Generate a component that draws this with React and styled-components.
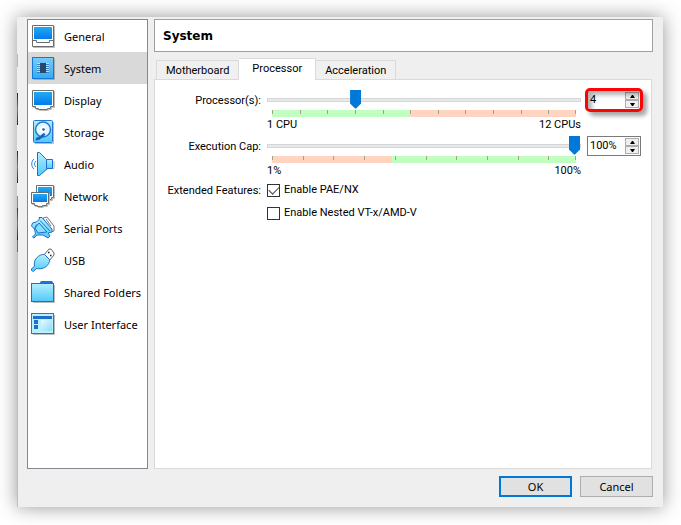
import React, { useState } from "react";
import styled, { createGlobalStyle, css } from "styled-components";

const GlobalStyle = createGlobalStyle`
	* {
		box-sizing: border-box;
	}

	body {
		margin: 0;
		background: #fff;
		color: #000;
		font-family: Roboto, "Liberation Sans", sans-serif;
		font-size: 11px;
		line-height: 16px;
	}

	button,
	input {
		font: inherit;
		color: inherit;
	}
`;

const Desktop = styled.div`
	display: flex;
	min-height: 100vh;
	padding: 17px 18px 18px 17px;
`;

const Dialog = styled.main`
	flex: 1;
	display: flex;
	flex-direction: column;
	padding: 2px 10px 10px 9px;
	background: #efefef;
	border: 0 solid;
	border-left-width: 1px;
	border-image: linear-gradient(
			#efefef 38px,
			#b9b9b9 38px 51px,
			#efefef 51px 77px,
			#222 77px,
			#777 93px,
			#222 109px,
			#efefef 109px 134px,
			#222 134px,
			#777 150px,
			#222 166px,
			#efefef 166px 179px,
			#3a9bea 179px 191px,
			#333 191px,
			#777 207px,
			#222 223px,
			#1685e0 223px 235px,
			#bdbdbd 235px
		)
		1;
	box-shadow: 0 0 18px rgba(0, 0, 0, 0.42);
`;

const Body = styled.div`
	flex: 1;
	display: grid;
	grid-template-columns: 121px 1fr;
	gap: 6px;
`;

const Sidebar = styled.nav`
	background: #fff;
	border: 1px solid #828790;
	font-family: "Noto Sans", "Open Sans", sans-serif;
`;

const NavItem = styled.a`
	display: flex;
	align-items: center;
	gap: 9px;
	height: 32px;
	padding: 1px 0 0 3px;
	color: #000;
	text-decoration: none;
	white-space: nowrap;
	background: ${({ $active }) => ($active ? "#d9d9d9" : "transparent")};

	svg {
		flex: none;
		margin-bottom: 1px;
	}
`;

const Content = styled.section`
	display: flex;
	flex-direction: column;
	min-width: 0;
`;

const Title = styled.h1`
	margin: 0;
	height: 33px;
	padding: 0 8px;
	border: 1px solid #a0a0a0;
	background: #fff;
	font-family: "DejaVu Sans", sans-serif;
	font-size: 12px;
	font-weight: bold;
	line-height: 33px;
`;

const Tabs = styled.div`
	display: flex;
	align-items: flex-end;
	height: 27px;
	padding-left: 2px;
`;

const Tab = styled.button`
	height: 19px;
	padding: 1px 9px 0;
	border: 1px solid #dadada;
	border-bottom: 0;
	background: #f0f0f0;
	line-height: 16px;

	& + & {
		border-left: 0;
	}

	${({ $active }) =>
		$active &&
		css`
			height: 22px;
			margin-bottom: -1px;
			padding: 0 13px 1px;
			background: #fff;
			z-index: 1;
		`}
`;

const Panel = styled.div`
	flex: 1;
	margin-right: 1px;
	padding: 10px 10px 10px 9px;
	border: 1px solid #dadada;
	background: #fff;
`;

const Form = styled.div`
	display: grid;
	grid-template-columns: 97px 1fr 54px;
	column-gap: 6px;
`;

const Label = styled.label`
	padding-top: 3px;
	text-align: right;
	white-space: nowrap;
`;

const GroupLabel = styled(Label)`
	padding-top: 1px;
`;

const SliderBlock = styled.div`
	height: 46px;
	min-width: 0;
`;

const Range = styled.input`
	appearance: none;
	display: block;
	width: 100%;
	height: 19px;
	margin: 0;
	background: transparent;

	&::-webkit-slider-runnable-track {
		height: 4px;
		border: 1px solid #d6d6d6;
		background: #e7eaea;
	}

	&::-webkit-slider-thumb {
		appearance: none;
		width: 11px;
		height: 19px;
		margin-top: -9px;
		background: #0078d7;
		clip-path: polygon(0 0, 100% 0, 100% 14px, 6px 100%, 5px 100%, 0 14px);
	}
`;

const Scale = styled.div`
	display: grid;
	grid-template-columns: ${({ $columns }) => $columns};
	height: 7px;
	margin: 1px 5px 0;
	background: linear-gradient(
		to right,
		${({ $from, $split }) => `${$from} ${$split}`},
		${({ $to, $split }) => `${$to} ${$split}`}
	);
`;

const Tick = styled.span`
	height: 4px;
	border-left: 1px solid #a5a192;

	&:last-child {
		border-right: 1px solid #a5a192;
	}
`;

const Limits = styled.div`
	display: flex;
	justify-content: space-between;
`;

const Spin = styled.div`
	position: relative;
	display: flex;
	height: 20px;
	border: 1px solid #7a7a7a;
	background: #fff;

	${({ $marked }) =>
		$marked &&
		css`
			&::after {
				content: "";
				position: absolute;
				inset: -3px;
				border: 3px solid #fa0505;
				border-radius: 5px;
				box-shadow: 4px 4px 4px rgba(0, 0, 0, 0.35),
					inset 4px 4px 4px rgba(0, 0, 0, 0.3);
				pointer-events: none;
			}
		`}
`;

const SpinInput = styled.input`
	flex: 1;
	min-width: 0;
	padding: 0 0 0 2px;
	border: 0;
	outline: 0;
	background: transparent;
`;

const SpinButtons = styled.div`
	display: flex;
	flex-direction: column;
	width: 14px;
	margin: 1px;
`;

const SpinButton = styled.button`
	flex: 1;
	display: flex;
	align-items: center;
	justify-content: center;
	padding: 0;
	border: 1px solid #adadad;
	background: #efefef;
`;

const Checks = styled.div`
	display: grid;
	grid-column: span 2;
	gap: 7px;
`;

const Check = styled.label`
	display: flex;
	align-items: center;
	gap: 4px;
`;

const CheckBox = styled.input`
	appearance: none;
	width: 13px;
	height: 13px;
	margin: 0;
	border: 1px solid #333;
	background: #fff;

	&:checked::after {
		content: "";
		display: block;
		width: 9px;
		height: 5px;
		margin: 1px;
		border: solid #444;
		border-width: 0 0 1px 1px;
		transform: rotate(-45deg);
	}
`;

const Footer = styled.footer`
	display: flex;
	justify-content: flex-end;
	gap: 8px;
	padding-top: 7px;
	font-family: "Noto Sans", "Open Sans", sans-serif;
`;

const DialogButton = styled.button`
	width: 73px;
	height: 21px;
	padding: 0;
	border: ${({ $primary }) =>
		$primary ? "2px solid #0078d7" : "1px solid #adadad"};
	background: #e1e1e1;
`;

const Screen = ({ d, x, y, w, h }) => (
	<>
		<path d={d} transform="translate(1 1)" fill="none" stroke="#bbb" />
		<path d={d} fill="#fff" stroke="#6c6c6c" />
		<rect x={x} y={y} width={w} height={h} fill="url(#screen)" />
	</>
);

const icons = {
	general: (
		<>
			<Screen d="M1.5 1.5h21v21h-21z" x={3} y={3} w={18} h={12} />
			<path d="M1.5 16.5h4v2h13v-2h4" fill="none" stroke="#6c6c6c" />
		</>
	),
	system: (
		<>
			<path d="M2.5 23.5h21v-21" fill="none" stroke="#aaa" />
			<rect x="1.5" y="1.5" width="21" height="21" fill="url(#chip)" stroke="#1478d8" />
			<path d="M6 7.5h12M6 9.5h12M6 11.5h12M6 13.5h12M6 15.5h12" stroke="#b5e2fa" />
			<path d="M6 8.5h12M6 10.5h12M6 12.5h12M6 14.5h12M6 16.5h12" stroke="#3b82c4" />
			<rect x="9" y="7" width="6" height="10" fill="#26486b" />
		</>
	),
	display: (
		<Screen
			d="M1.5 2.5h21v16h-3v2h-3v1h-9v-1h-3v-2h-3z"
			x={3}
			y={4}
			w={18}
			h={13}
		/>
	),
	storage: (
		<>
			<path d="M4 23.5h18.500V2" fill="none" stroke="#bbb" />
			<rect x="2.500" y=".5" width="19" height="22" rx="1" fill="url(#light)" stroke="#2477d4" />
			<circle cx="12" cy="9.500" r="7.500" fill="#e2f7ff" stroke="#2477d4" strokeWidth="1.500" />
			<circle cx="12" cy="9.500" r="3" fill="#fff" />
			<circle cx="12.500" cy="9.500" r="1.300" fill="#1a56a8" />
			<path d="M12.500 13l2 1-1.500 2.500L8 20l-3.500.5L5 18l4-2z" fill="#1c62bd" />
		</>
	),
	audio: (
		<>
			<path d="M7 23.500l2-1 8-6h6V9" fill="none" stroke="#bbb" />
			<path d="M3 7c-3 2-3 8 0 10M5 9c-2 2-2 4 0 6" fill="none" stroke="#2b7fda" />
			<path d="M6.500.5h2l8 8v8l-8 7h-2z" fill="url(#light)" stroke="#1b70cf" />
			<path d="M15.500 7.500h6v9h-6z" fill="url(#light)" stroke="#1b70cf" />
		</>
	),
	network: (
		<>
			<Screen d="M5.500 1.500h17v12h-2v2h-15z" x={7} y={3} w={14} h={9} />
			<Screen d="M.5 8.500h17v11h-2v2h-4v1h-5v-1h-3v-2h-3z" x={2} y={10} w={14} h={8} />
		</>
	),
	serial: (
		<>
			<path d="M12 2l4-1 7 9v5l-3 1z" fill="#fff" stroke="#777" />
			<path d="M15 3l5 7" stroke="#777" />
			<path d="M8 1.500h3l10 11.500v3l-4 1 2 3-2 2-5-3H6l-3 3-1.500-1 3-3-1-5-3-3 1-3 4-1 3-3z" fill="url(#light)" stroke="#1b70cf" strokeLinejoin="round" />
			<path d="M9 4.500L19 15M5.500 8.500L3.500 13.500" stroke="#1b70cf" />
			<path d="M8 7l8 9-9 1-3-5z" fill="#8bdefb" stroke="#1b70cf" strokeLinejoin="round" />
		</>
	),
	usb: (
		<>
			<path d="M13 7l5-6h2l3 4v2l-5 6z" fill="#fff" stroke="#666" strokeLinejoin="round" />
			<path d="M17 4.500h1.500M19 7.500h1.500" stroke="#222" strokeWidth="1.500" />
			<path d="M11.500 6.500h2l5 5v2c-2 6-7 8-13 7l-3 3-2-1v-1.500l3-3c-1-5 2-10 8-11.500z" fill="url(#light)" stroke="#1b70cf" />
		</>
	),
	folders: (
		<>
			<path d="M2 22.500h21.500V5" fill="none" stroke="#bbb" />
			<path d="M8 4l2-3h11l2 3v2H8z" fill="#2372cf" />
			<rect x=".5" y="3.500" width="22" height="18" fill="url(#light)" stroke="#1b70cf" />
		</>
	),
	ui: (
		<>
			<path d="M2 22.500h21.500V3" fill="none" stroke="#bbb" />
			<rect x=".5" y="1.500" width="22" height="20" fill="#b9efff" stroke="#2477d4" />
			<path d="M2 4h19v3H2zM3 8h4v4H3zM3 13h4v4H3z" fill="#1f6ecb" />
			<rect x="10" y="8" width="11" height="11" fill="url(#pane)" />
		</>
	),
};

const Icon = ({ name }) => (
	<svg width="24" height="24" viewBox="0 0 24 24" aria-hidden="true">
		{icons[name]}
	</svg>
);

const Defs = styled.svg`
	position: absolute;
	width: 0;
	height: 0;
`;

const IconGradients = () => (
	<Defs aria-hidden="true">
		<defs>
			<linearGradient id="screen" x2="0" y2="1">
				<stop stopColor="#22aaf0" />
				<stop offset="1" stopColor="#027bee" />
			</linearGradient>
			<linearGradient id="chip" x2="0" y2="1">
				<stop stopColor="#7bcbf8" />
				<stop offset="1" stopColor="#35abf2" />
			</linearGradient>
			<linearGradient id="light" x2="0" y2="1">
				<stop stopColor="#b4efff" />
				<stop offset="1" stopColor="#4fcaf8" />
			</linearGradient>
			<linearGradient id="pane" x2="1" y2="1">
				<stop stopColor="#e6faff" />
				<stop offset="1" stopColor="#8bdcf8" />
			</linearGradient>
		</defs>
	</Defs>
);

const pages = [
	["general", "General"],
	["system", "System"],
	["display", "Display"],
	["storage", "Storage"],
	["audio", "Audio"],
	["network", "Network"],
	["serial", "Serial Ports"],
	["usb", "USB"],
	["folders", "Shared Folders"],
	["ui", "User Interface"],
];

const SliderRow = ({ id, label, min, max, value, onChange, suffix = "", limits, scale, marked }) => {
	const step = delta =>
		onChange(Math.min(max, Math.max(min, value + delta)));

	const handleText = e => {
		const next = parseInt(e.target.value, 10);
		if (next >= min && next <= max) {
			onChange(next);
		}
	};

	return (
		<>
			<Label htmlFor={id}>{label}</Label>
			<SliderBlock>
				<Range
					id={id}
					type="range"
					min={min}
					max={max}
					value={value}
					onChange={e => onChange(Number(e.target.value))}
				/>
				<Scale $columns={scale.columns} $from={scale.from} $to={scale.to} $split={scale.split}>
					{Array.from({ length: scale.cells }, (_, i) => (
						<Tick key={i} />
					))}
				</Scale>
				<Limits>
					<span>{limits[0]}</span>
					<span>{limits[1]}</span>
				</Limits>
			</SliderBlock>
			<Spin $marked={marked}>
				<SpinInput aria-label={label} value={value + suffix} onChange={handleText} />
				<SpinButtons>
					<SpinButton aria-label="Increase" onClick={() => step(1)}>
						<svg width="5" height="3"><path d="M2 0h1l2 3H0z" /></svg>
					</SpinButton>
					<SpinButton aria-label="Decrease" onClick={() => step(-1)}>
						<svg width="5" height="3"><path d="M0 0h5L3 3H2z" /></svg>
					</SpinButton>
				</SpinButtons>
			</Spin>
		</>
	);
};

const GREEN = "#c1ffc1";
const RED = "#ffd5c1";

const App = () => {
	const [page, setPage] = useState("system");
	const [tab, setTab] = useState("Processor");
	const [cpus, setCpus] = useState(4);
	const [cap, setCap] = useState(100);

	return (
		<Desktop>
			<GlobalStyle />
			<IconGradients />
			<Dialog>
				<Body>
					<Sidebar>
						{pages.map(([name, text]) => (
							<NavItem
								key={name}
								href={`#${name}`}
								$active={page === name}
								onClick={() => setPage(name)}
							>
								<Icon name={name} />
								{text}
							</NavItem>
						))}
					</Sidebar>
					<Content>
						<Title>System</Title>
						<Tabs role="tablist">
							{["Motherboard", "Processor", "Acceleration"].map(name => (
								<Tab
									key={name}
									role="tab"
									aria-selected={tab === name}
									$active={tab === name}
									onClick={() => setTab(name)}
								>
									{name}
								</Tab>
							))}
						</Tabs>
						<Panel role="tabpanel">
							<Form>
								<SliderRow
									id="cpus"
									label="Processor(s):"
									min={1}
									max={12}
									value={cpus}
									onChange={setCpus}
									limits={["1 CPU", "12 CPUs"]}
									scale={{ columns: "repeat(11, 1fr)", cells: 11, from: GREEN, to: RED, split: "45.5%" }}
									marked
								/>
								<SliderRow
									id="cap"
									label="Execution Cap:"
									min={1}
									max={100}
									value={cap}
									onChange={setCap}
									suffix="%"
									limits={["1%", "100%"]}
									scale={{ columns: "repeat(9, 10fr) 9fr", cells: 10, from: RED, to: GREEN, split: "39.4%" }}
								/>
								<GroupLabel as="span">Extended Features:</GroupLabel>
								<Checks>
									<Check>
										<CheckBox type="checkbox" defaultChecked />
										Enable PAE/NX
									</Check>
									<Check>
										<CheckBox type="checkbox" />
										Enable Nested VT-x/AMD-V
									</Check>
								</Checks>
							</Form>
						</Panel>
					</Content>
				</Body>
				<Footer>
					<DialogButton $primary>OK</DialogButton>
					<DialogButton>Cancel</DialogButton>
				</Footer>
			</Dialog>
		</Desktop>
	);
};

export default App;
